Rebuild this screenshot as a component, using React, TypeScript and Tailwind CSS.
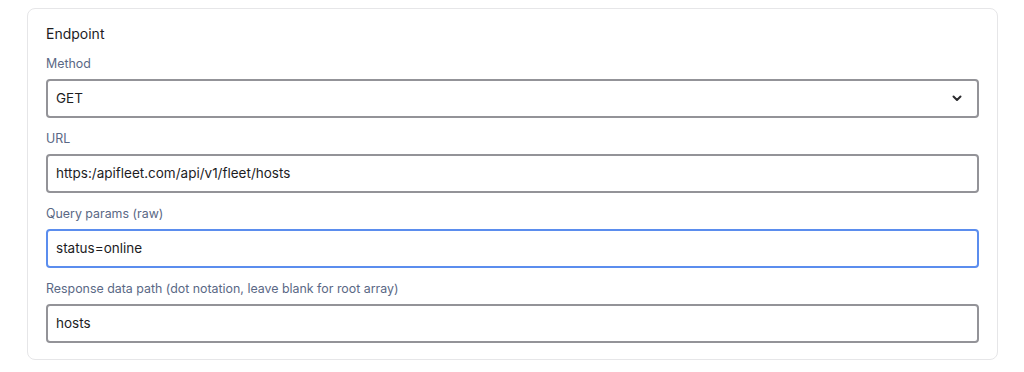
import React from "react";

const fields = [
  { label: "URL", value: "https:/apifleet.com/api/v1/fleet/hosts" },
  { label: "Query params (raw)", value: "status=online", focused: true },
  {
    label: "Response data path (dot notation, leave blank for root array)",
    value: "hosts",
  },
];

const App = () => {
  return (
    <div className="min-h-[372px] bg-white pt-2 pl-[27px] pr-[26px] font-['Inter',sans-serif]">
      <div className="rounded-lg border border-[#e6e6e8] bg-white px-[18px] pt-[15px] pb-4">
        <div className="mb-3 h-5 text-[14px] leading-5 text-[#1d1d1f]">
          Endpoint
        </div>
        <div className="flex flex-col gap-[13px]">
          <div>
            <div className="mb-[7px] h-4 text-[12.4px] leading-4 text-[#5a6885]">
              Method
            </div>
            <div className="flex h-[39px] items-center justify-between rounded-[4px] border-2 border-[#939398] pl-[8px] pr-[15px] text-[13.5px] text-[#1d1d1f]">
              <span>GET</span>
              <svg width="10" height="7" viewBox="0 0 10 7">
                <path
                  d="M1.5 1.5 L5 5 L8.5 1.5"
                  fill="none"
                  stroke="#2b2b2e"
                  strokeWidth="2"
                  strokeLinecap="round"
                  strokeLinejoin="round"
                />
              </svg>
            </div>
          </div>
          {fields.map((f, i) => (
            <div key={i}>
              <div className="mb-[7px] h-4 text-[12.4px] leading-4 text-[#5a6885]">
                {f.label}
              </div>
              <div
                className={
                  f.focused
                    ? "flex h-[39px] items-center rounded-[4px] border-2 border-[#5b8dee] pl-[8px] text-[13.5px] text-[#1d1d1f]"
                    : "flex h-[39px] items-center rounded-[4px] border-2 border-[#939398] pl-[8px] text-[13.5px] text-[#1d1d1f]"
                }
              >
                {f.value}
              </div>
            </div>
          ))}
        </div>
      </div>
    </div>
  );
};

export default App;
